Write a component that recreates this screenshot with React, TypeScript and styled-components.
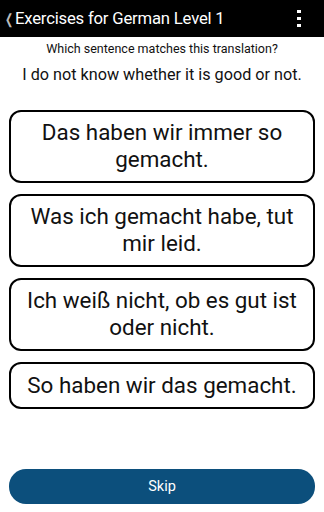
import React from "react";
import styled, { createGlobalStyle } from "styled-components";

const Global = createGlobalStyle`
  html, body { margin: 0; padding: 0; background: #fff; }
  body { font-family: Roboto, "Liberation Sans", sans-serif; }
  * { box-sizing: border-box; }
`;

const Screen = styled.div`
  width: 324px;
  height: 512px;
  display: flex;
  flex-direction: column;
  background: #fff;
  overflow: hidden;
`;

const Header = styled.div`
  height: 37px;
  background: #000;
  display: flex;
  align-items: center;
  padding: 0 0 0 3px;
  color: #fff;
`;

const Back = styled.span`
  font-size: 14px;
  color: #bbb;
  width: 12px;
  display: inline-flex;
  justify-content: center;
  transform: scaleX(0.7);
`;

const Title = styled.div`
  font-size: 16.7px;
  flex: 1;
  padding-left: 0;
  letter-spacing: -0.2px;
`;

const Menu = styled.div`
  width: 30px;
  display: flex;
  flex-direction: column;
  align-items: center;
  gap: 3.5px;
  margin-right: 10px;
`;

const Dot = styled.span`
  width: 3.5px;
  height: 3.5px;
  background: #fff;
`;

const Prompt = styled.div`
  text-align: center;
  font-size: 12.5px;
  color: #111;
  margin-top: 4px;
  line-height: 16px;
`;

const Translation = styled.div`
  text-align: center;
  font-size: 16.2px;
  color: #111;
  margin-top: 8px;
  line-height: 20px;
`;

const Options = styled.div`
  display: flex;
  flex-direction: column;
  gap: 11.5px;
  padding: 0 9px;
  margin-top: 25px;
`;

const Option = styled.div<{ $tall?: boolean }>`
  border: 2px solid #000;
  border-radius: 12px;
  min-height: ${(p) => (p.$tall ? 72.5 : 47)}px;
  display: flex;
  align-items: center;
  justify-content: center;
  text-align: center;
  font-size: 22.4px;
  line-height: 27px;
  color: #111;
  padding: 6px 12px;
`;

const Spacer = styled.div`
  flex: 1;
`;

const Skip = styled.button`
  margin: 0 9px 8px;
  height: 35px;
  border: none;
  border-radius: 17px;
  background: #0c4f7c;
  color: #fff;
  font-family: Roboto, "Liberation Sans", sans-serif;
  font-size: 14.5px;
`;

const options = [
  "Das haben wir immer so gemacht.",
  "Was ich gemacht habe, tut mir leid.",
  "Ich weiß nicht, ob es gut ist oder nicht.",
  "So haben wir das gemacht.",
];

export default function App() {
  return (
    <Screen>
      <Global />
      <Header>
        <Back>❮</Back>
        <Title>Exercises for German Level 1</Title>
        <Menu>
          <Dot />
          <Dot />
          <Dot />
        </Menu>
      </Header>
      <Prompt>Which sentence matches this translation?</Prompt>
      <Translation>I do not know whether it is good or not.</Translation>
      <Options>
        {options.map((o, i) => (
          <Option key={i} $tall={i < 3}>
            {o}
          </Option>
        ))}
      </Options>
      <Spacer />
      <Skip>Skip</Skip>
    </Screen>
  );
}
